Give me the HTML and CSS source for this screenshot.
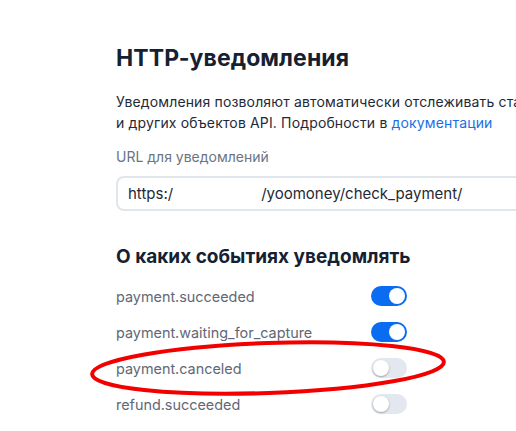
FILE: index.html
```html
<!DOCTYPE html>
<html lang="ru">
<head>
    <meta charset="UTF-8">
    <title>HTTP-уведомления</title>
    <link rel="stylesheet" href="styles.css">
</head>
<body>
    <div class="page">
        <h1 class="title">HTTP-уведомления</h1>
        <p class="lead">Уведомления позволяют автоматически отслеживать ста<br>и других объектов API. Подробности в <a href="#">документации</a></p>
        <label class="field-label" for="url">URL для уведомлений</label>
        <div class="field">
            <span class="field-text">https:/</span><span class="field-gap"></span><span class="field-text">/yoomoney/check_payment/</span>
        </div>
        <h2 class="subtitle">О каких событиях уведомлять</h2>
        <div class="events">
            <div class="event"><span>payment.succeeded</span><span class="toggle on"></span></div>
            <div class="event"><span>payment.waiting_for_capture</span><span class="toggle on"></span></div>
            <div class="event"><span>payment.canceled</span><span class="toggle"></span></div>
            <div class="event"><span>refund.succeeded</span><span class="toggle"></span></div>
        </div>
    </div>
    <svg class="mark" width="366" height="66" viewBox="0 0 366 66">
        <ellipse cx="182" cy="32" rx="176" ry="25" transform="rotate(-2 182 32)" fill="none" stroke="#f20000" stroke-width="4"/>
    </svg>
</body>
</html>
```

FILE: styles.css
```css
* { margin: 0; padding: 0; box-sizing: border-box; }
body { font-family: Inter, "Noto Sans", sans-serif; background: #fff; color: #1c2634; width: 516px; height: 431px; overflow: hidden; position: relative; }
.page { padding: 44px 0 0 116px; display: flex; flex-direction: column; }
.title { font-size: 23px; font-weight: 700; line-height: 28px; color: #152131; letter-spacing: 0.1px; }
.lead { font-size: 14px; line-height: 21px; margin-top: 19px; white-space: nowrap; color: #1f2937; letter-spacing: 0.15px; }
.lead a { color: #1a6fe6; text-decoration: none; }
.field-label { font-size: 14px; line-height: 20px; color: #6b7482; margin-top: 14px; }
.field { margin-top: 9px; height: 35px; width: 420px; border: 2px solid #e1e5ec; border-right: none; border-radius: 8px 0 0 8px; display: flex; align-items: center; padding-left: 10px; font-size: 15px; color: #1f2937; }
.field-gap { width: 88px; }
.subtitle { font-size: 19px; font-weight: 700; line-height: 24px; color: #152131; margin-top: 34px; }
.events { margin-top: 9px; width: 291px; display: flex; flex-direction: column; }
.event { height: 36px; display: flex; align-items: center; justify-content: space-between; font-size: 14.4px; color: #5f6877; }
.toggle { width: 36px; height: 20px; border-radius: 10px; background: #e3e7ef; position: relative; }
.toggle::after { content: ""; position: absolute; top: 2px; left: 2px; width: 16px; height: 16px; border-radius: 50%; background: #fff; box-shadow: 0 1px 2px rgba(0, 0, 0, 0.3); }
.toggle.on { background: #0a6cf0; }
.toggle.on::after { left: 18px; box-shadow: none; }
.mark { position: absolute; left: 86px; top: 336px; }
```
